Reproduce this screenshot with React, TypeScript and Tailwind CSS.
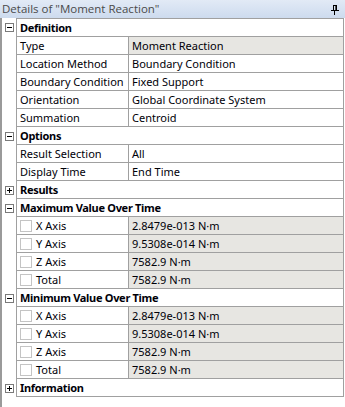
import React from "react";

type Row =
  | { kind: "group"; label: string; open: boolean }
  | { kind: "prop"; name: string; value: string; gray?: boolean; check?: boolean };

const rows: Row[] = [
  { kind: "group", label: "Definition", open: true },
  { kind: "prop", name: "Type", value: "Moment Reaction", gray: true },
  { kind: "prop", name: "Location Method", value: "Boundary Condition" },
  { kind: "prop", name: "Boundary Condition", value: "Fixed Support" },
  { kind: "prop", name: "Orientation", value: "Global Coordinate System" },
  { kind: "prop", name: "Summation", value: "Centroid" },
  { kind: "group", label: "Options", open: true },
  { kind: "prop", name: "Result Selection", value: "All" },
  { kind: "prop", name: "Display Time", value: "End Time" },
  { kind: "group", label: "Results", open: false },
  { kind: "group", label: "Maximum Value Over Time", open: true },
  { kind: "prop", name: "X Axis", value: "2.8479e-013 N·m", gray: true, check: true },
  { kind: "prop", name: "Y Axis", value: "9.5308e-014 N·m", gray: true, check: true },
  { kind: "prop", name: "Z Axis", value: "7582.9 N·m", gray: true, check: true },
  { kind: "prop", name: "Total", value: "7582.9 N·m", gray: true, check: true },
  { kind: "group", label: "Minimum Value Over Time", open: true },
  { kind: "prop", name: "X Axis", value: "2.8479e-013 N·m", gray: true, check: true },
  { kind: "prop", name: "Y Axis", value: "9.5308e-014 N·m", gray: true, check: true },
  { kind: "prop", name: "Z Axis", value: "7582.9 N·m", gray: true, check: true },
  { kind: "prop", name: "Total", value: "7582.9 N·m", gray: true, check: true },
  { kind: "group", label: "Information", open: false },
];

function Expander({ open }: { open: boolean }) {
  return (
    <div className="w-[9px] h-[9px] border border-[#7a7a7a] bg-white relative">
      <div className="absolute left-[1px] top-[3px] w-[5px] h-[1px] bg-black" />
      {!open && <div className="absolute left-[3px] top-[1px] w-[1px] h-[5px] bg-black" />}
    </div>
  );
}

function PinIcon() {
  return (
    <svg width="8" height="10" viewBox="0 0 8 10" shapeRendering="crispEdges">
      <rect x="2" y="0" width="4" height="1" fill="#000" />
      <rect x="2" y="0" width="1" height="6" fill="#000" />
      <rect x="5" y="0" width="1" height="6" fill="#000" />
      <rect x="4" y="1" width="1" height="5" fill="#555" />
      <rect x="0" y="5" width="8" height="1" fill="#000" />
      <rect x="3" y="6" width="1" height="4" fill="#000" />
    </svg>
  );
}

export default function App() {
  const font = { fontFamily: '"Noto Sans", "DejaVu Sans", sans-serif' };
  return (
    <div className="w-[345px] h-[407px] bg-white flex flex-col overflow-hidden" style={font}>
      <div className="h-[18px] flex items-center justify-between bg-gradient-to-b from-[#e2eaf6] to-[#cddbee] pl-[2px] pr-[5px]">
        <span className="text-[11.5px] leading-[18px] text-[#4a4a4a]" style={{ fontFamily: '"Open Sans", "Noto Sans", sans-serif' }}>
          Details of "Moment Reaction"
        </span>
        <div className="mr-[1px] mt-[1px]">
          <PinIcon />
        </div>
      </div>
      <div className="flex-1 border-l-2 border-[#9a9a9a]">
        <div className="flex flex-col">
          {rows.map((r, i) => (
            <div key={i} className="flex">
              <div className="w-[14px] flex items-center justify-center pl-[1px]">
                {r.kind === "group" && <Expander open={r.open} />}
              </div>
              <div
                className={
                  "w-[328px] flex border-l border-r border-b border-[#a0a0a0] text-[11px] leading-[17px] text-[#000008] " +
                  (i === 0 ? "border-t h-[19px]" : "h-[18px]")
                }
              >
                {r.kind === "group" ? (
                  <span className="pl-[3px] font-bold tracking-[-0.3px]">{r.label}</span>
                ) : (
                  <>
                    <div className="w-[112px] border-r border-[#a0a0a0] flex items-center pl-[3px]">
                      {r.check && (
                        <div className="w-[12px] h-[12px] border border-[#c4c4c4] bg-white mr-[4px]" />
                      )}
                      <span>{r.name}</span>
                    </div>
                    <div className={"flex-1 pl-[3px] " + (r.gray ? "bg-[#e7e6e2]" : "bg-white")}>
                      {r.value}
                    </div>
                  </>
                )}
              </div>
            </div>
          ))}
        </div>
      </div>
    </div>
  );
}
